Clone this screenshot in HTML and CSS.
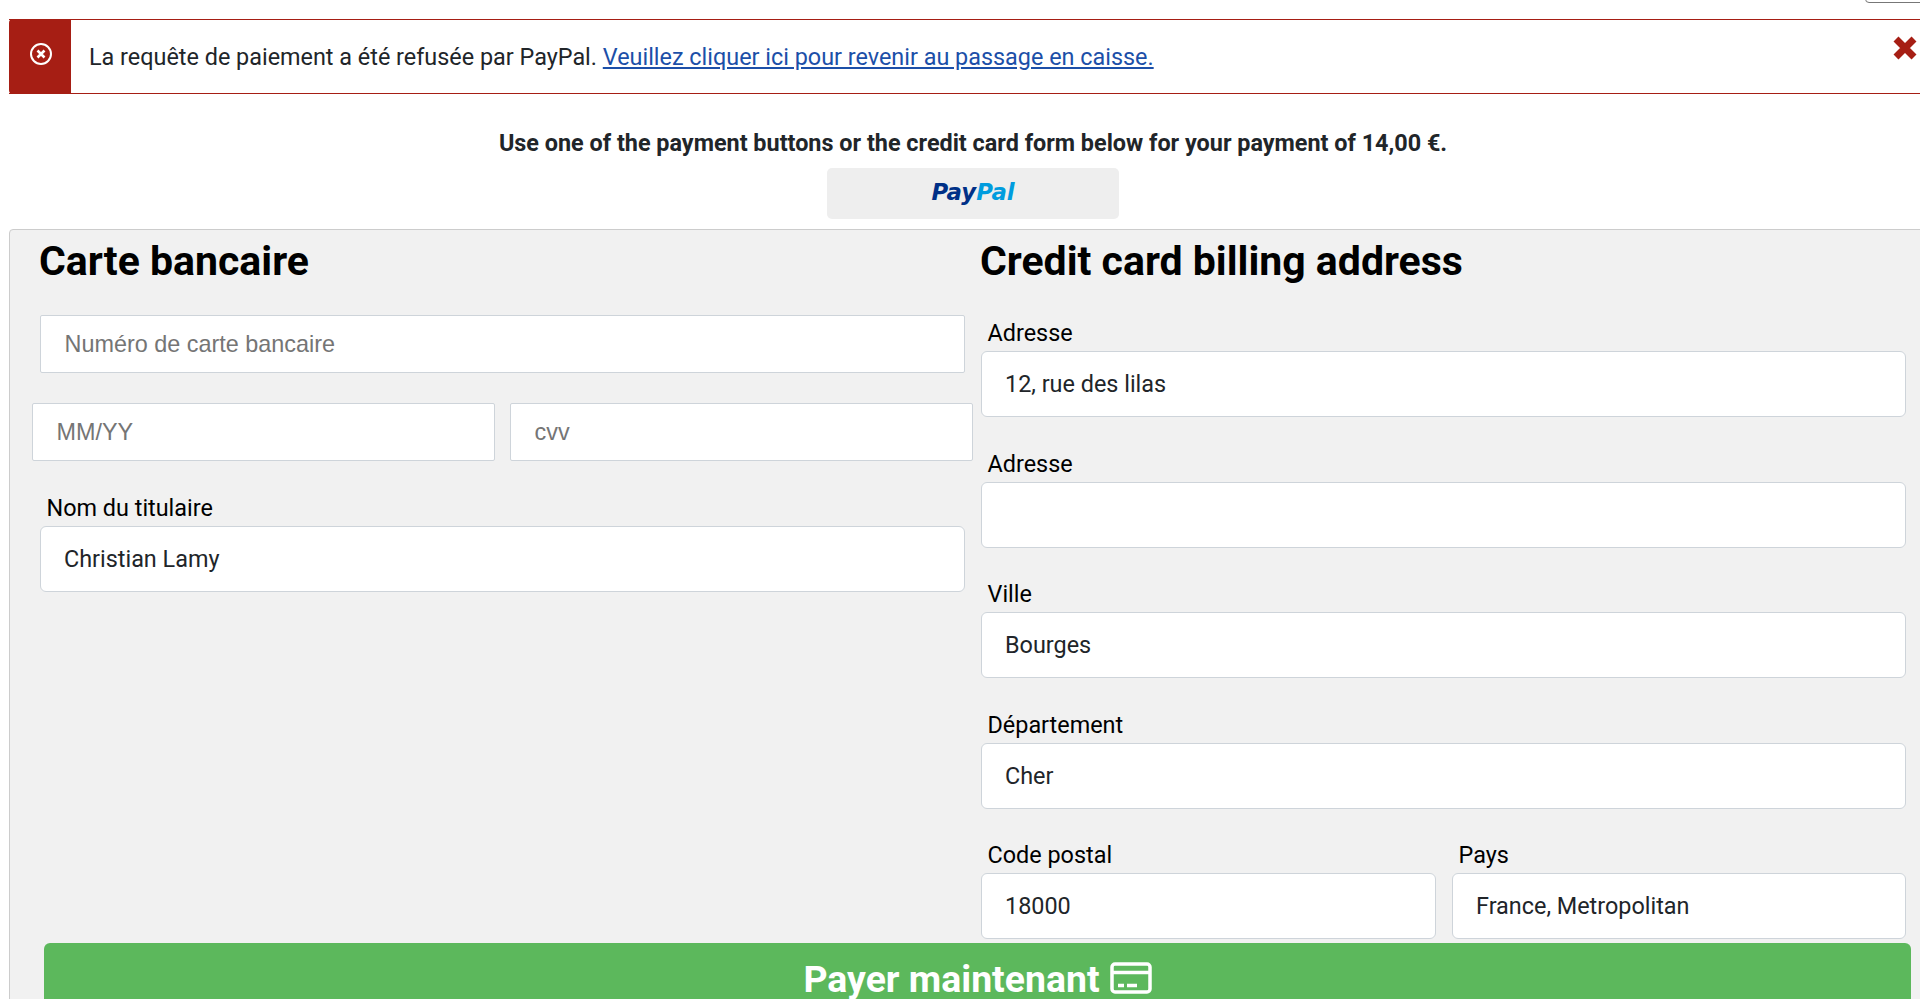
FILE: index.html
```html
<!DOCTYPE html>
<html lang="fr">
  <head>
    <meta charset="UTF-8">
    <title>Paiement</title>
    <link rel="stylesheet" href="styles.css">
  </head>
  <body>
    <div class="top-tab"></div>

    <!-- Error notice -->
    <div class="alert">
      <div class="alert-icon">
        <svg width="24" height="24" viewBox="0 0 24 24" fill="none" stroke="#fff">
          <circle cx="12" cy="12" r="10" stroke-width="2"/>
          <path d="M8.5 8.5l7 7M15.5 8.5l-7 7" stroke-width="2.6"/>
        </svg>
      </div>
      <p class="alert-text">La requête de paiement a été refusée par PayPal. <a href="#">Veuillez cliquer ici pour revenir au passage en caisse.</a></p>
      <svg class="alert-close" width="26" height="26" viewBox="0 0 26 26" fill="none" stroke="#a61e14" stroke-width="7">
        <path d="M4 4l18 18M22 4L4 22"/>
      </svg>
    </div>

    <div class="pay-options">
      <p class="intro">Use one of the payment buttons or the credit card form below for your payment of 14,00 €.</p>
      <button class="paypal-btn"><span class="pay">Pay</span><span class="pal">Pal</span></button>
    </div>

    <!-- Payment form -->
    <form class="panel">
      <div class="columns">
        <div class="column">
          <h2>Carte bancaire</h2>
          <input class="card-input card-number" type="text" placeholder="Numéro de carte bancaire">
          <div class="card-row">
            <input class="card-input" type="text" placeholder="MM/YY">
            <input class="card-input" type="text" placeholder="cvv">
          </div>
          <div class="field">
            <label>Nom du titulaire</label>
            <input type="text" value="Christian Lamy">
          </div>
        </div>

        <div class="column billing">
          <h2>Credit card billing address</h2>
          <div class="field">
            <label>Adresse</label>
            <input type="text" value="12, rue des lilas">
          </div>
          <div class="field">
            <label>Adresse</label>
            <input type="text" value="">
          </div>
          <div class="field">
            <label>Ville</label>
            <input type="text" value="Bourges">
          </div>
          <div class="field">
            <label>Département</label>
            <input type="text" value="Cher">
          </div>
          <div class="field-row">
            <div class="field">
              <label>Code postal</label>
              <input type="text" value="18000">
            </div>
            <div class="field">
              <label>Pays</label>
              <input type="text" value="France, Metropolitan">
            </div>
          </div>
        </div>
      </div>

      <button class="pay-btn" type="button">
        Payer maintenant
        <svg width="42" height="32" viewBox="0 0 42 32" fill="none" stroke="#fff" stroke-width="3.5">
          <rect x="2" y="2" width="38" height="28" rx="3"/>
          <path d="M2 10.5h38M8 23.5h6M17 23.5h10"/>
        </svg>
      </button>
    </form>
  </body>
</html>
```

FILE: styles.css
```css
html,
body {
  height: 999px;
  overflow: hidden;
}

body {
  margin: 0;
  background-color: #fff;
  font-family: Roboto, sans-serif;
  color: #212529;
  padding-top: 19px;
  box-sizing: border-box;
}

.top-tab {
  position: absolute;
  top: -10px;
  right: -10px;
  width: 63px;
  height: 11px;
  border: 1px solid #777;
  border-radius: 4px;
}

/* Error notice */
.alert {
  position: relative;
  display: flex;
  align-items: center;
  height: 75px;
  margin-left: 9px;
  margin-right: -20px;
  border-top: 1px solid #a61e14;
  border-bottom: 1px solid #a61e14;
  box-sizing: border-box;
}

.alert-icon {
  display: flex;
  justify-content: center;
  align-items: center;
  align-self: stretch;
  width: 62px;
  margin: -1px 0;
  padding: 0 0 6px 1px;
  box-sizing: border-box;
  background-color: #a61e14;
  border-radius: 4px 0 0 4px;
}

.alert-text {
  margin: 0 0 0 18px;
  font-size: 23.4px;
  line-height: 30px;
}

.alert-text a {
  color: #1c4fa8;
}

.alert-close {
  position: absolute;
  top: 15px;
  right: 22px;
}

.pay-options {
  width: 1946px;
}

.intro {
  margin: 34px 0 10px;
  font-size: 23.4px;
  font-weight: bold;
  line-height: 30px;
  text-align: center;
}

.paypal-btn {
  display: block;
  width: 292px;
  height: 51px;
  margin: 0 auto 10px;
  padding: 0 0 4px;
  border: none;
  border-radius: 5px;
  background-color: #eee;
  font-family: "DejaVu Sans", sans-serif;
  font-size: 22.8px;
  font-weight: bold;
  font-style: italic;
}

.pay {
  color: #003087;
}

.pal {
  color: #009cde;
}

/* Payment form */
.panel {
  width: 1960px;
  height: 800px;
  margin-left: 9px;
  padding-left: 22px;
  box-sizing: border-box;
  background-color: #f1f1f1;
  border: 1px solid #ccc;
  border-radius: 4px 0 0 0;
}

.columns {
  display: grid;
  grid-template-columns: 941px 941px;
}

h2 {
  margin: 8px 8px 31px 7px;
  font-size: 41px;
  font-weight: bold;
  line-height: 46px;
  color: #000;
}

.billing h2 {
  margin-bottom: 34px;
}

.card-input {
  display: block;
  height: 58px;
  padding: 0 23.5px;
  border: 1px solid #ced4da;
  border-radius: 2px;
  box-sizing: border-box;
  background-color: #fff;
  font-family: "Liberation Sans", sans-serif;
  font-size: 23.4px;
}

.card-input::placeholder {
  color: #757575;
}

.card-number {
  width: 925px;
  margin: 0 8px 30px;
}

.card-row {
  display: grid;
  grid-template-columns: 463px 463px;
  gap: 15px;
  margin-bottom: 32px;
}

.card-row .card-input {
  width: 100%;
}

.field {
  margin: 0 8px 31.5px;
}

.field-row {
  display: grid;
  grid-template-columns: 455px 454px;
  gap: 16px;
  margin: 0 8px;
}

.field-row .field {
  margin: 0;
}

label {
  display: block;
  padding-left: 6.5px;
  margin-bottom: 3px;
  font-size: 23.4px;
  line-height: 30px;
  color: #000;
}

input {
  display: block;
  width: 100%;
  height: 66px;
  padding: 0 23px;
  border: 1px solid #ced4da;
  border-radius: 6px;
  box-sizing: border-box;
  background-color: #fff;
  font-family: Roboto, sans-serif;
  font-size: 23.4px;
  color: #212529;
}

.pay-btn {
  display: flex;
  justify-content: center;
  align-items: flex-start;
  gap: 10px;
  width: 1867px;
  height: 90px;
  margin: 4px 0 0 12px;
  padding: 14px 0 0;
  border: none;
  border-radius: 6px;
  background-color: #5cb85c;
  font-family: Roboto, sans-serif;
  font-size: 37.4px;
  font-weight: bold;
  line-height: 44px;
  color: #fff;
}

.pay-btn svg {
  margin-top: 5px;
}
```
